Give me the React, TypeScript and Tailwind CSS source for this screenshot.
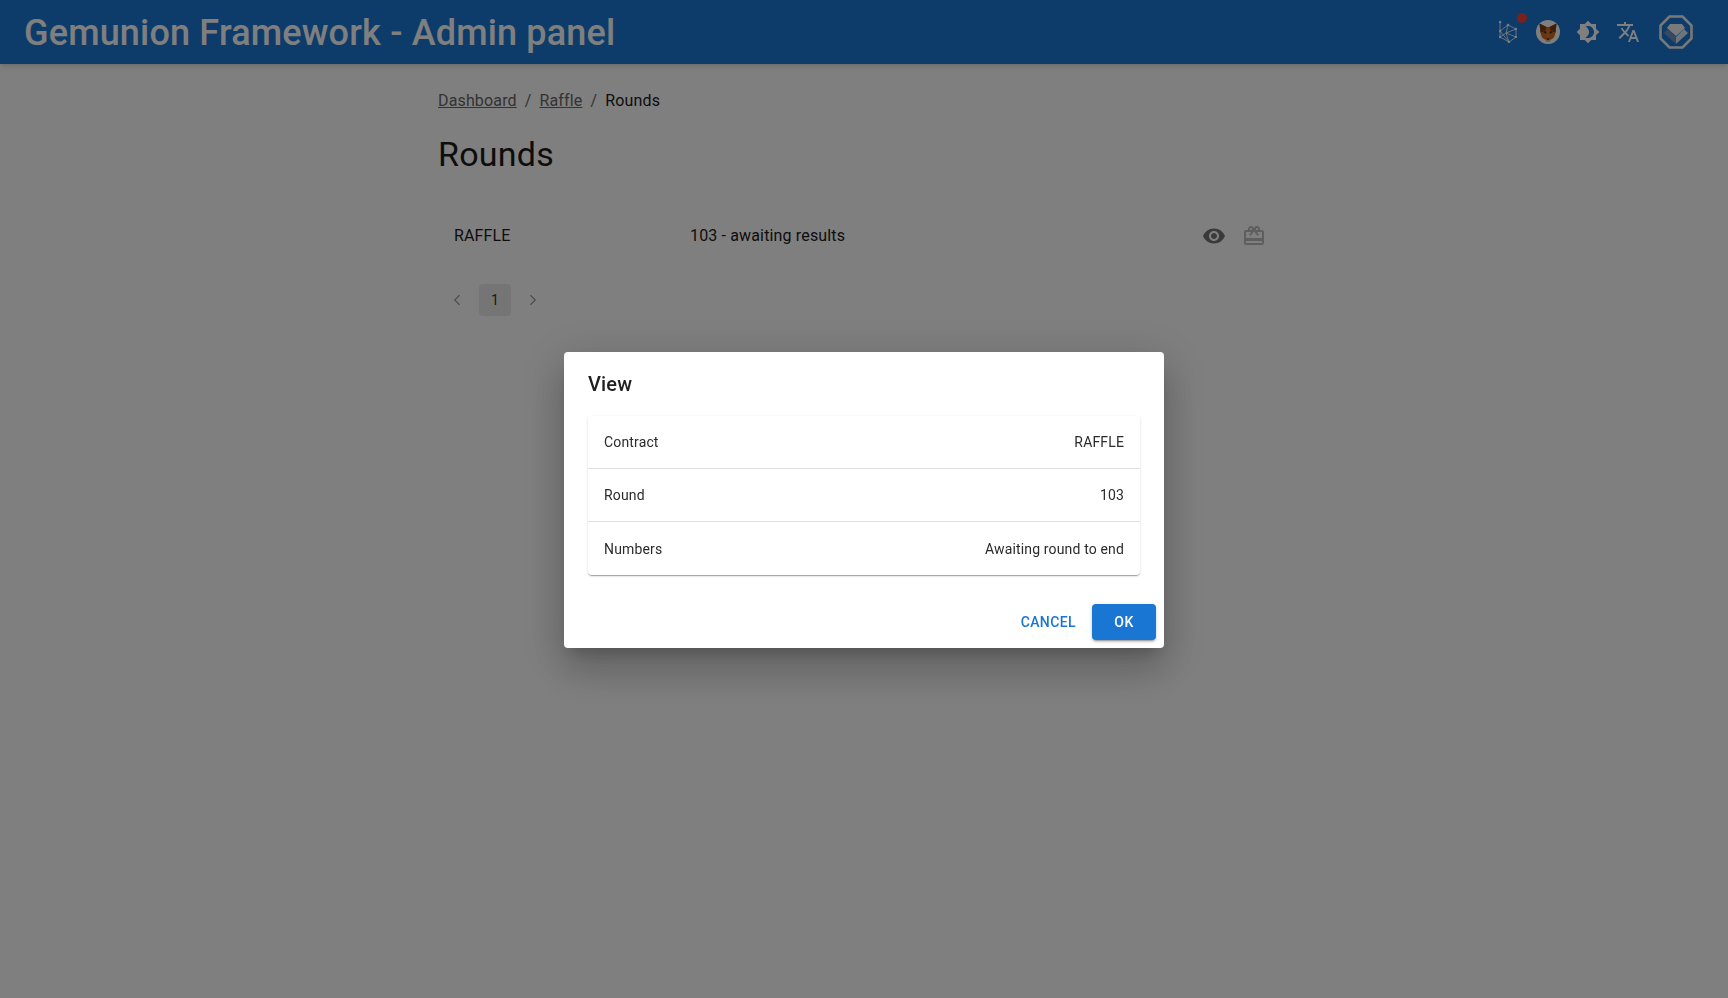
import { ChevronLeft, ChevronRight } from "lucide-react";

const rows = [
  { label: "Contract", value: "RAFFLE" },
  { label: "Round", value: "103" },
  { label: "Numbers", value: "Awaiting round to end" },
];

function Icon({ d, className }: { d: string; className: string }) {
  return (
    <svg viewBox="0 0 24 24" fill="currentColor" className={className}>
      <path d={d} />
    </svg>
  );
}

function GraphLogo() {
  return (
    <svg viewBox="0 0 18 22" fill="none" stroke="currentColor" strokeWidth="0.8" className="h-[22px] w-[18px]">
      <path d="M1 1v15l9 5 7-5V8L9 4 1 10l9 11M9 4l-2 8 10 4M7 12l3 9M17 8L7 12M1 16l6-4" />
      <circle cx="1" cy="1" r="1" fill="currentColor" />
      <circle cx="9" cy="4" r="0.9" fill="currentColor" />
      <circle cx="17" cy="8" r="0.9" fill="currentColor" />
      <circle cx="17" cy="16" r="0.9" fill="currentColor" />
      <circle cx="10" cy="21" r="0.9" fill="currentColor" />
      <circle cx="1" cy="10" r="0.9" fill="currentColor" />
      <circle cx="1" cy="16" r="0.9" fill="currentColor" />
    </svg>
  );
}

function FoxLogo() {
  return (
    <div className="flex h-6 w-6 items-center justify-center rounded-full bg-white">
      <svg viewBox="0 0 24 24" className="h-6 w-6">
        <path d="M3.5 3.5l7 3.5h3l7-3.5-1 9-1.5 5-3.5 2.5h-5L6 17.5l-1.5-5z" fill="#d5691a" />
        <path d="M3.5 3.5L10.5 7l-1.5 4-4.5 1.5zM20.5 3.5L13.5 7l1.5 4 4.5 1.5z" fill="#763d16" />
        <path d="M7 12l3-1 .5 3zM17 12l-3-1-.5 3z" fill="#233447" />
        <path d="M12 9l-2 7 2 3 2-3z" fill="#e2761b" />
        <path d="M9 19.5h6L14 22h-4z" fill="#d7c1b3" />
        <path d="M10.5 18.5h3L12 20.5z" fill="#161616" />
      </svg>
    </div>
  );
}

function GemLogo() {
  return (
    <svg viewBox="0 0 34 34" className="h-[34px] w-[34px]">
      <path d="M10.5 1.5h13l9 9v13l-9 9h-13l-9-9v-13z" fill="none" stroke="#f0f0f0" strokeWidth="2.6" />
      <path d="M11 9h12l3 4-9 8-9-8z" fill="#f0f4f8" />
      <path d="M5 18l4-4 8 8v7z" fill="#6f93c4" />
      <path d="M17 22l8-8 4 4-12 11z" fill="#dfe8f2" />
    </svg>
  );
}

export default function App() {
  return (
    <div className="min-h-screen bg-white font-['Roboto',sans-serif] text-[#1a1a1a]">
      <header className="flex h-16 items-center justify-between bg-[#1b78d6] pl-6 pr-[35px] text-white shadow-md">
        <h1 className="pt-[2px] text-[36px] font-medium leading-none tracking-[0.17px]">Gemunion Framework - Admin panel</h1>
        <div className="flex items-center">
          <div className="relative flex w-10 justify-center">
            <GraphLogo />
            <span className="absolute right-px top-[-8px] h-2.5 w-2.5 rounded-full bg-[#f44336]" />
          </div>
          <div className="flex w-10 justify-center"><FoxLogo /></div>
          <div className="flex w-10 justify-center">
            <Icon className="h-6 w-6" d="M20 8.69V4h-4.69L12 .69 8.69 4H4v4.69L.69 12 4 15.31V20h4.69L12 23.31 15.31 20H20v-4.69L23.31 12 20 8.69zM12 18c-.89 0-1.74-.2-2.5-.55C11.56 16.5 13 14.42 13 12s-1.44-4.5-3.5-5.45C10.26 6.2 11.11 6 12 6c3.31 0 6 2.69 6 6s-2.69 6-6 6z" />
          </div>
          <div className="flex w-10 justify-center">
            <Icon className="h-6 w-6" d="m12.87 15.07-2.54-2.51.03-.03c1.74-1.94 2.98-4.17 3.71-6.53H17V4h-7V2H8v2H1v1.99h11.17C11.5 7.92 10.44 9.75 9 11.35 8.07 10.32 7.3 9.19 6.69 8h-2c.73 1.63 1.73 3.17 2.98 4.56l-5.09 5.02L4 19l5-5 3.11 3.11.76-2.04zM18.5 10h-2L12 22h2l1.12-3h4.75L21 22h2l-4.5-12zm-2.62 7 1.62-4.33L19.12 17h-3.24z" />
          </div>
          <div className="ml-[11px]"><GemLogo /></div>
        </div>
      </header>

      <main className="mx-auto w-[900px] px-6">
        <nav className="flex items-center pt-[25px] text-base leading-6 tracking-[0.15px] text-[#666]">
          <a className="underline">Dashboard</a>
          <span className="mx-2">/</span>
          <a className="underline">Raffle</a>
          <span className="mx-2">/</span>
          <span className="text-[#1a1a1a]">Rounds</span>
        </nav>
        <h2 className="mt-[20px] text-[34px] leading-[42px] tracking-[0.25px]">Rounds</h2>

        <div className="mt-[30px] flex h-[62px] items-center px-4 text-base tracking-[0.15px]">
          <div className="w-[236px]">RAFFLE</div>
          <div className="flex-1">103 - awaiting results</div>
          <div className="flex items-center gap-4 pr-[8px]">
            <Icon className="h-6 w-6 text-[#757575]" d="M12 4.5C7 4.5 2.73 7.61 1 12c1.73 4.39 6 7.5 11 7.5s9.27-3.11 11-7.5c-1.73-4.39-6-7.5-11-7.5zM12 17c-2.76 0-5-2.24-5-5s2.24-5 5-5 5 2.24 5 5-2.24 5-5 5zm0-8c-1.66 0-3 1.34-3 3s1.34 3 3 3 3-1.34 3-3-1.34-3-3-3z" />
            <Icon className="h-6 w-6 text-[#bdbdbd]" d="M20 6h-2.18c.11-.31.18-.65.18-1 0-1.66-1.34-3-3-3-1.05 0-1.96.54-2.5 1.35l-.5.67-.5-.68C10.96 2.54 10.05 2 9 2 7.34 2 6 3.34 6 5c0 .35.07.69.18 1H4c-1.11 0-1.99.89-1.99 2L2 19c0 1.11.89 2 2 2h16c1.11 0 2-.89 2-2V8c0-1.11-.89-2-2-2zm-5-2c.55 0 1 .45 1 1s-.45 1-1 1-1-.45-1-1 .45-1 1-1zM9 4c.55 0 1 .45 1 1s-.45 1-1 1-1-.45-1-1 .45-1 1-1zm11 15H4v-2h16v2zm0-5H4V8h5.08L7 10.83 8.62 12 11 8.76l1-1.36 1 1.36L15.38 12 17 10.83 14.92 8H20v6z" />
          </div>
        </div>

        <div className="mt-[17px] flex items-center text-sm text-[#333]">
          <div className="flex h-8 w-[41px] items-center justify-center pr-[4px] text-[#999]"><ChevronLeft size={18} strokeWidth={1.5} /></div>
          <div className="flex h-8 w-8 items-center justify-center rounded bg-[#ebebeb]">1</div>
          <div className="ml-[6px] flex h-8 w-8 items-center justify-center text-[#999]"><ChevronRight size={18} strokeWidth={1.5} /></div>
        </div>
      </main>

      <div className="fixed inset-0 flex items-center justify-center bg-black/50 pt-[2px]">
        <div className="flex h-[296px] w-[600px] flex-col rounded bg-white shadow-[0_11px_15px_-7px_rgba(0,0,0,0.2),0_24px_38px_3px_rgba(0,0,0,0.14),0_9px_46px_8px_rgba(0,0,0,0.12)]">
          <h3 className="px-6 pt-4 text-xl font-medium leading-8 tracking-[0.15px] text-[#1f1f1f]">View</h3>
          <div className="mx-6 mt-[16px] rounded bg-white text-sm tracking-[0.15px] text-[#2b2b2b] shadow-[0_2px_1px_-1px_rgba(0,0,0,0.2),0_1px_1px_0_rgba(0,0,0,0.14),0_1px_3px_0_rgba(0,0,0,0.12)]">
            {rows.map((row, i) => (
              <div key={row.label} className={`flex h-[53px] items-center justify-between px-4 ${i < 2 ? "border-b border-[#e0e0e0]" : ""}`}>
                <span>{row.label}</span>
                <span>{row.value}</span>
              </div>
            ))}
          </div>
          <div className="mt-auto flex items-center justify-end gap-2 pb-2 pr-2">
            <button className="h-9 px-2 text-sm font-medium tracking-[0.4px] text-[#1976d2]">CANCEL</button>
            <button className="h-9 w-16 rounded bg-[#1976d2] text-sm font-medium tracking-[0.4px] text-white shadow-[0_3px_1px_-2px_rgba(0,0,0,0.2),0_2px_2px_0_rgba(0,0,0,0.14),0_1px_5px_0_rgba(0,0,0,0.12)]">OK</button>
          </div>
        </div>
      </div>
    </div>
  );
}
